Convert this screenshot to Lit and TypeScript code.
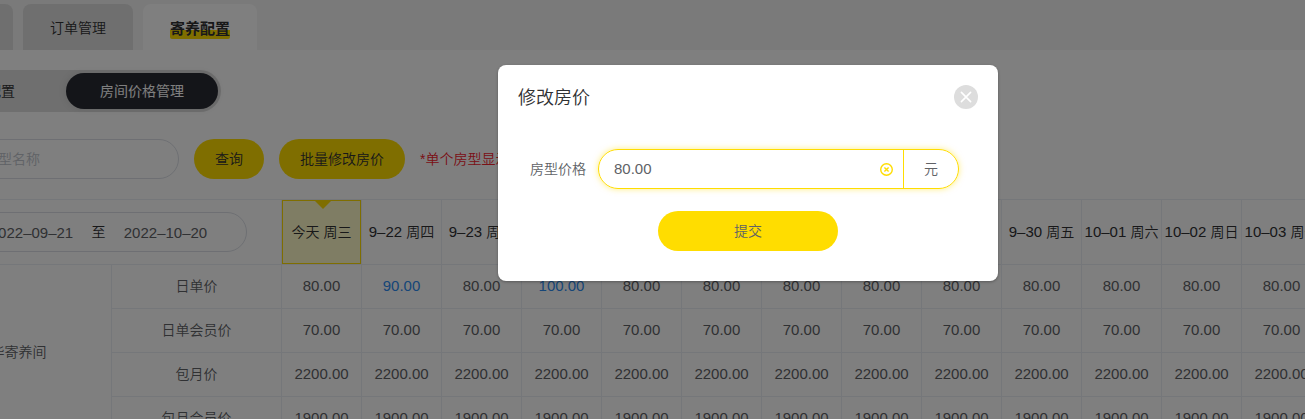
import { LitElement, html, css } from "lit";
import { customElement, state } from "lit/decorators.js";
import { classMap } from "lit/directives/class-map.js";

interface PriceRow {
  label: string;
  price: string;
  overrides?: Record<number, string>;
}

const DAYS: [string, string][] = [
  ["", "今天 周三"],
  ["9–22", "周四"],
  ["9–23", "周五"],
  ["9–24", "周六"],
  ["9–25", "周日"],
  ["9–26", "周一"],
  ["9–27", "周二"],
  ["9–28", "周三"],
  ["9–29", "周四"],
  ["9–30", "周五"],
  ["10–01", "周六"],
  ["10–02", "周日"],
  ["10–03", "周一"],
];

const ROWS: PriceRow[] = [
  { label: "日单价", price: "80.00", overrides: { 1: "90.00", 3: "100.00" } },
  { label: "日单会员价", price: "70.00" },
  { label: "包月价", price: "2200.00" },
  { label: "包月会员价", price: "1900.00" },
];

@customElement("price-table")
export class PriceTable extends LitElement {
  static styles = css`
    :host {
      display: block;
    }
    .table {
      table-layout: fixed;
      width: 1410px;
      border-collapse: separate;
      border-spacing: 0;
      border-top: 1px solid #ebeef5;
      color: #606266;
    }
    .room { width: 200px; }
    .kind { width: 170px; }
    .day { width: 80px; }
    th, td {
      box-sizing: border-box;
      height: 44px;
      padding: 0;
      border-right: 1px solid #ebeef5;
      border-bottom: 1px solid #ebeef5;
      font-weight: inherit;
      text-align: center;
      white-space: nowrap;
    }
    td { padding-bottom: 2px; }
    .head th {
      height: 65px;
      color: #303133;
    }
    .head .period { padding-right: 2px; }
    .num {
      font-size: 15px;
    }
    .changed { color: #2d8cf0; }
    .today {
      display: flex;
      position: relative;
      box-sizing: border-box;
      height: 64px;
      align-items: center;
      justify-content: center;
      border: 1px solid #ffdd00;
      background: #fffac8;
    }
    .today::before {
      content: "";
      position: absolute;
      top: 0;
      left: 50%;
      margin-left: -7px;
      border: 8px solid transparent;
      border-top-color: #ffdd00;
      border-bottom-width: 0;
    }
    .range {
      display: flex;
      box-sizing: border-box;
      width: 302px;
      height: 40px;
      margin: 0 auto;
      padding: 0 30px 0 36px;
      align-items: center;
      border: 1px solid #dcdfe6;
      border-radius: 20px;
      color: #303133;
    }
    .date {
      width: 100px;
      box-sizing: border-box;
      padding: 0;
      border: 0;
      outline: 0;
      background: none;
      color: #606266;
      text-align: center;
      font-family: inherit;
      font-weight: inherit;
      font-size: 15px;
    }
    .to { width: 34px; }
  `;

  render() {
    return html`
      <table class="table">
        <colgroup>
          <col class="room" /><col class="kind" />
          ${DAYS.map(() => html`<col class="day" />`)}
        </colgroup>
        <thead>
          <tr class="head">
            <th class="period" colspan="2">
              <div class="range">
                <input class="date" aria-label="开始日期" .value=${"2022–09–21"} />
                <span class="to">至</span>
                <input class="date" aria-label="结束日期" .value=${"2022–10–20"} />
              </div>
            </th>
            ${DAYS.map(([date, day]) =>
              date
                ? html`<th scope="col"><span class="num">${date} </span>${day}</th>`
                : html`<th scope="col"><div class="today">${day}</div></th>`
            )}
          </tr>
        </thead>
        <tbody>
          ${ROWS.map(
            (row, r) => html`<tr>
              ${r === 0 ? html`<td rowspan="4">豪华寄养间</td>` : ""}
              <td>${row.label}</td>
              ${DAYS.map((_, i) => {
                const changed = row.overrides?.[i];
                return html`<td class=${classMap({ num: true, changed: !!changed })}>${changed ?? row.price}</td>`;
              })}
            </tr>`
          )}
        </tbody>
      </table>
    `;
  }
}

@customElement("price-dialog")
export class PriceDialog extends LitElement {
  @state() private price = "80.00";

  static styles = css`
    :host {
      display: flex;
      position: absolute;
      inset: 0;
      box-sizing: border-box;
      padding: 65px 0 0 191px;
      align-items: flex-start;
      justify-content: center;
      background: rgba(0, 0, 0, 0.5);
    }
    .dialog {
      box-sizing: border-box;
      width: 500px;
      padding: 20px 20px 30px;
      border-radius: 8px;
      background: #fff;
      box-shadow: 0 1px 3px rgba(0, 0, 0, 0.3);
      color: #606266;
    }
    .header {
      display: flex;
      height: 24px;
      align-items: center;
      justify-content: space-between;
    }
    .title {
      margin: 0;
      padding-top: 2px;
      color: #303133;
      font-size: 18px;
      font-weight: inherit;
      line-height: 24px;
    }
    .close, .clear {
      display: flex;
      padding: 0;
      border: 0;
      background: none;
      cursor: pointer;
    }
    .field {
      display: flex;
      margin: 40px 19px 22px 12px;
      align-items: center;
      gap: 12px;
    }
    .group {
      display: flex;
      box-sizing: border-box;
      flex: 1;
      height: 40px;
      align-items: stretch;
      border: 1px solid #ffdd00;
      border-radius: 20px;
      box-shadow: 0 0 6px rgba(255, 221, 0, 0.5);
    }
    .input {
      flex: 1;
      min-width: 0;
      padding: 0 15px 2px;
      border: 0;
      outline: 0;
      background: none;
      color: #606266;
      font-family: inherit;
      font-weight: inherit;
      font-size: 15px;
    }
    .clear {
      align-items: center;
      padding-right: 10px;
    }
    .unit {
      display: flex;
      padding: 0 20px;
      align-items: center;
      border-left: 1px solid #ffdd00;
    }
    .submit {
      display: block;
      width: 180px;
      height: 40px;
      margin: 0 auto;
      padding: 0;
      border: 0;
      border-radius: 20px;
      background: #ffdd00;
      color: #606266;
      font: inherit;
      cursor: pointer;
    }
  `;

  render() {
    return html`
      <form class="dialog" role="dialog" aria-labelledby="title" @submit=${(e: Event) => e.preventDefault()}>
        <div class="header">
          <h2 class="title" id="title">修改房价</h2>
          <button class="close" type="button" aria-label="关闭">
            <svg width="24" height="24" viewBox="0 0 24 24">
              <circle cx="12" cy="12" r="12" fill="#ddd" />
              <path d="M7.4 7.4l9.2 9.2M16.6 7.4l-9.2 9.2" stroke="#fff" stroke-width="1.6" stroke-linecap="round" />
            </svg>
          </button>
        </div>
        <div class="field">
          <label for="price">房型价格</label>
          <div class="group">
            <input
              class="input"
              id="price"
              .value=${this.price}
              @input=${(e: Event) => (this.price = (e.target as HTMLInputElement).value)}
            />
            <button class="clear" type="button" aria-label="清空" @click=${() => (this.price = "")}>
              <svg width="13" height="13" viewBox="0 0 13 13" fill="none" stroke="#ffdd00">
                <circle cx="6.5" cy="6.5" r="5.8" stroke-width="1.4" />
                <path d="M4.4 4.4l4.2 4.2M8.6 4.4l-4.2 4.2" stroke-width="1.4" />
              </svg>
            </button>
            <span class="unit">元</span>
          </div>
        </div>
        <button class="submit" type="submit">提交</button>
      </form>
    `;
  }
}

@customElement("app-root")
export class AppRoot extends LitElement {
  static styles = css`
    :host {
      display: block;
      position: relative;
      height: 100vh;
      overflow: hidden;
      background: #fff;
      color: #303133;
      font-family: "Liberation Sans", "Noto Sans CJK SC", sans-serif;
      font-size: 14px;
      font-weight: 350;
      line-height: 20px;
    }
    .page { margin-left: -100px; }
    .tabs {
      display: flex;
      height: 46px;
      padding: 4px 3px 0;
      gap: 10px;
      background: #f5f5f5;
    }
    .tab {
      width: 110px;
      padding: 2px 0 0;
      border: 0;
      border-radius: 8px 8px 0 0;
      background: #dedede;
      color: #303133;
      font: inherit;
    }
    .tab.active {
      width: 114px;
      padding-top: 4px;
      background: #fff;
      font-size: 15px;
      font-weight: 700;
    }
    .mark {
      padding-bottom: 2px;
      border-radius: 2px;
      background: linear-gradient(#ffdd00, #ffdd00) bottom / 100% 9px no-repeat;
    }
    .segments {
      display: flex;
      width: fit-content;
      margin: 20px 0 27px 8px;
      padding: 3px;
      gap: 3px;
      border-radius: 21px;
      background: #dedede;
    }
    .segment {
      width: 152px;
      height: 36px;
      padding: 0;
      border: 0;
      border-radius: 18px;
      background: none;
      color: #303133;
      font: inherit;
    }
    .segment.active {
      background: #282a32;
      box-shadow: 0 0 8px rgba(0, 0, 0, 0.1);
      color: #fff;
      font-weight: 400;
    }
    .search {
      display: flex;
      margin: 0 0 20px 26px;
      align-items: center;
      gap: 15px;
    }
    .query {
      box-sizing: border-box;
      width: 253px;
      height: 40px;
      padding: 0 15px;
      border: 1px solid #dcdfe6;
      border-radius: 20px;
      background: none;
      font: inherit;
    }
    .query::placeholder { color: #c0c4cc; }
    .button {
      height: 40px;
      padding: 0 21px;
      border: 0;
      border-radius: 20px;
      background: #ffdd00;
      color: #303133;
      font: inherit;
    }
    .tip {
      color: #f5222d;
      white-space: nowrap;
    }
    .prices { margin-left: 12px; }
  `;

  render() {
    return html`
      <div class="page">
        <nav class="tabs">
          <button class="tab">房间管理</button>
          <button class="tab">订单管理</button>
          <button class="tab active"><span class="mark">寄养配置</span></button>
        </nav>
        <div class="segments">
          <button class="segment">房型配置</button>
          <button class="segment active">房间价格管理</button>
        </div>
        <div class="search">
          <input class="query" aria-label="房型名称" placeholder="请输入房型名称" />
          <button class="button">查询</button>
          <button class="button">批量修改房价</button>
          <span class="tip">*单个房型显示</span>
        </div>
        <price-table class="prices"></price-table>
      </div>
      <price-dialog></price-dialog>
    `;
  }
}
